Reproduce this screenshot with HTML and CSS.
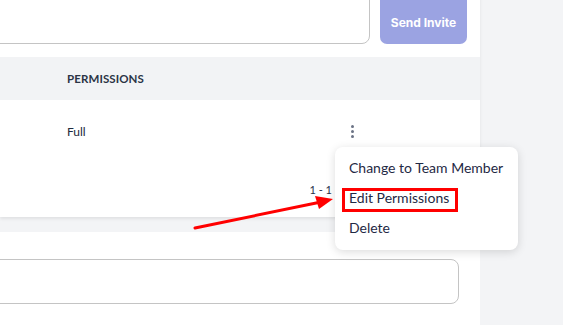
FILE: index.html
```html
<!DOCTYPE html>
<html lang="en">
<head>
    <meta charset="UTF-8">
    <meta name="viewport" content="width=device-width, initial-scale=1.0">
    <title>Team - Permissions</title>
    <link rel="stylesheet" href="styles.css">
</head>
<body>
    <div class="page">
        <div class="main">
            <div class="card card-top">
                <form class="invite">
                    <input type="email" class="invite-input">
                    <button type="button" class="invite-btn">Send Invite</button>
                </form>

                <div class="table">
                    <div class="thead">
                        <div class="col-perm">PERMISSIONS</div>
                    </div>
                    <div class="trow">
                        <div class="col-perm">Full</div>
                        <div class="col-action">
                            <span class="kebab"><i></i><i></i><i></i></span>
                        </div>
                    </div>
                </div>

                <div class="pager">1 - 1</div>
            </div>

            <div class="card card-bottom">
                <input type="text" class="wide-input">
            </div>
        </div>
        <div class="side"></div>
    </div>

    <div class="menu">
        <div class="menu-item">Change to Team Member</div>
        <div class="menu-item">Edit Permissions</div>
        <div class="menu-item">Delete</div>
        <div class="highlight"></div>
    </div>

    <svg class="arrow" width="150" height="40" viewBox="0 0 150 40">
        <line x1="2" y1="36" x2="128" y2="10" stroke="#f00" stroke-width="3" stroke-linecap="round"/>
        <polygon points="140,7 122,4 126,17" fill="#f00"/>
    </svg>
</body>
</html>
```

FILE: styles.css
```css
body {
    margin: 0;
    background: #f3f4f6;
    font-family: 'Lato', 'Open Sans', sans-serif;
    color: #1f2944;
    overflow: hidden;
    height: 325px;
}
.page {
    display: flex;
    min-height: 325px;
}
.main { width: 480px; }
.side { flex: 1; }

.card { background: #fff; }
.card-top {
    box-shadow: 0 2px 3px rgba(0,0,0,0.08);
}

.invite {
    display: flex;
    gap: 10px;
    height: 54px;
    margin: -10px 0 0;
    padding-right: 13px;
}
.invite-input {
    flex: 1;
    margin: 0 0 0 -20px;
    height: 54px;
    border: 1px solid #c4c4c4;
    border-radius: 8px;
    box-sizing: border-box;
}
.invite-btn {
    width: 87px;
    height: 54px;
    border: none;
    border-radius: 7px;
    background: #9ba3e2;
    color: #fff;
    font-family: 'Inter', sans-serif;
    font-size: 12px;
    font-weight: 700;
    padding-top: 12px;
}

.table { margin-top: 13px; }
.thead {
    display: flex;
    align-items: center;
    height: 43px;
    background: #f2f3f5;
}
.trow {
    display: flex;
    align-items: center;
    height: 62px;
}
.col-perm {
    padding-left: 67px;
    width: 284px;
}
.thead .col-perm {
    font-size: 11.5px;
    font-weight: 700;
    color: #2b3446;
    letter-spacing: 0.1px;
}
.trow .col-perm {
    font-size: 12px;
    color: #202a3d;
}
.kebab {
    display: flex;
    flex-direction: column;
    gap: 2px;
    width: 3px;
    padding-top: 1px;
}
.kebab i {
    width: 3px;
    height: 3px;
    border-radius: 50%;
    background: #6b7385;
}

.pager {
    height: 55px;
    line-height: 55px;
    text-align: right;
    padding-right: 148px;
    font-size: 11px;
    color: #27304a;
}

.card-bottom {
    margin-top: 15px;
    padding: 27px 21px 30px 0;
}
.wide-input {
    display: block;
    width: calc(100% + 20px);
    margin-left: -20px;
    height: 45px;
    border: 1px solid #c4c4c4;
    border-radius: 8px;
    box-sizing: border-box;
}

/* dropdown menu over the table */
.menu {
    position: absolute;
    left: 335px;
    top: 147px;
    width: 183px;
    padding: 6px 0 7px;
    background: #fff;
    border-radius: 8px;
    box-shadow: 0 2px 10px rgba(0,0,0,0.14);
    box-sizing: border-box;
}
.menu-item {
    height: 30px;
    line-height: 30px;
    padding-left: 14px;
    font-size: 14px;
    color: #1f2944;
    white-space: nowrap;
}
.highlight {
    position: absolute;
    left: 7px;
    top: 41px;
    width: 116px;
    height: 24px;
    border: 3px solid #f00;
    box-sizing: border-box;
}
.arrow {
    position: absolute;
    left: 193px;
    top: 192px;
}
```
